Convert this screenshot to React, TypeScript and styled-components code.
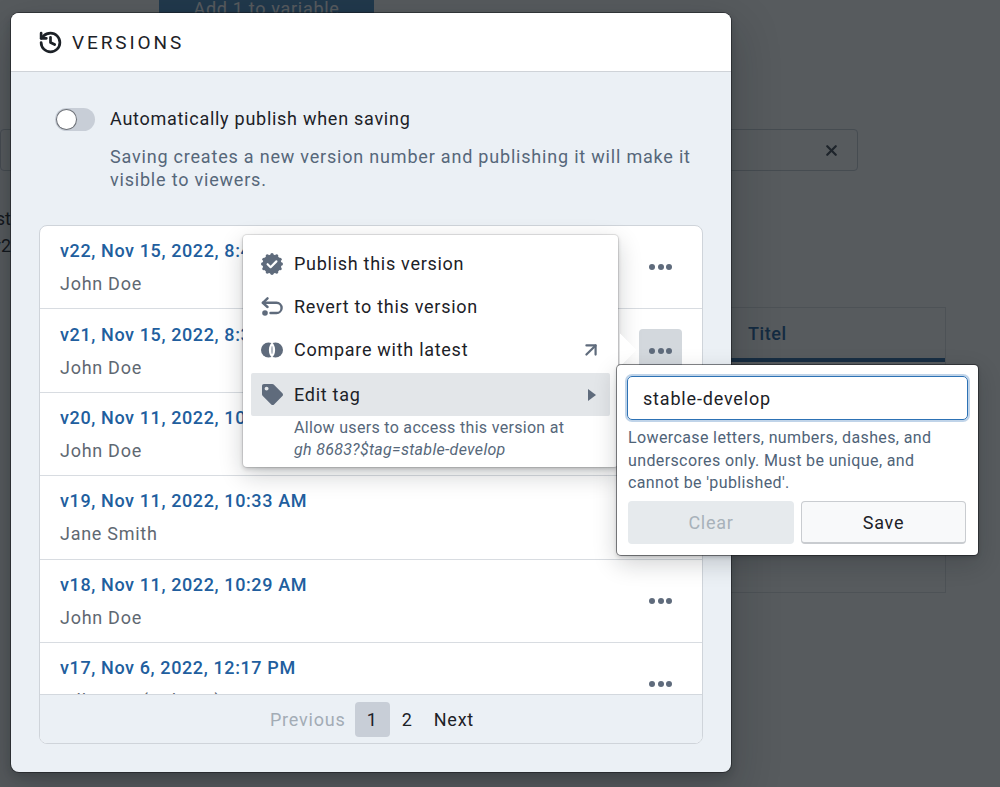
import styled, { createGlobalStyle } from "styled-components";
import { ArrowUpRight, History, X } from "lucide-react";
import { FaTag } from "react-icons/fa";

const GlobalStyle = createGlobalStyle`
  html, body {
    margin: 0;
    padding: 0;
    height: 100%;
    overflow: hidden;
    background: #fff;
    font-family: Roboto, "Liberation Sans", sans-serif;
  }
  * { box-sizing: border-box; }
`;

const Page = styled.div`
  position: relative;
  width: 1000px;
  height: 787px;
  overflow: hidden;
  display: flex;
  flex-direction: column;
  color: #1c2127;
`;

const AddButton = styled.div`
  width: 215px;
  height: 43px;
  margin: -13px 0 0 159px;
  flex: none;
  display: flex;
  align-items: center;
  justify-content: center;
  background: #4a8cc4;
  color: #fff;
  font-size: 18px;
  letter-spacing: 0.7px;
`;

const SearchField = styled.div`
  width: 858px;
  height: 42px;
  margin-top: 99px;
  flex: none;
  padding-right: 17px;
  display: flex;
  align-items: center;
  justify-content: flex-end;
  border: 1px solid #c5cbd3;
  border-radius: 4px;
  color: #404854;
`;

const LowerRow = styled.div`
  display: flex;
  align-items: flex-start;
  margin-top: 34px;
`;

const SideNote = styled.div`
  width: 60px;
  margin: 0 440px 0 -49px;
  flex: none;
  text-align: right;
  font-size: 18px;
  line-height: 27px;
  white-space: nowrap;
`;

const TableBox = styled.div`
  width: 495px;
  height: 286px;
  margin-top: 102px;
  flex: none;
  border: 1px solid #dce0e5;
`;

const TableHead = styled.div`
  height: 54px;
  padding-left: 296px;
  display: flex;
  align-items: center;
  border-bottom: 4px solid #2d6aa3;
  color: #215e9e;
  font-size: 18px;
  font-weight: 500;
  letter-spacing: 0.6px;
`;

const Backdrop = styled.div`
  position: absolute;
  inset: 0;
  background: rgba(16, 22, 26, 0.7);
`;

const Modal = styled.div`
  position: absolute;
  left: 11px;
  top: 13px;
  width: 720px;
  height: 759px;
  display: flex;
  flex-direction: column;
  background: #ebf0f5;
  border-radius: 8px;
  box-shadow:
    0 0 0 1px rgba(17, 20, 24, 0.5),
    0 4px 8px rgba(17, 20, 24, 0.2),
    0 18px 46px 6px rgba(17, 20, 24, 0.2);
`;

const ModalHeader = styled.header`
  height: 59px;
  flex: none;
  padding-left: 27px;
  display: flex;
  align-items: center;
  gap: 9px;
  background: #fff;
  border-bottom: 1px solid #cfd3d8;
  border-radius: 8px 8px 0 0;
`;

const ModalTitle = styled.h2`
  margin: 0;
  font-size: 19px;
  font-weight: 400;
  letter-spacing: 2.9px;
  color: #1c2127;
`;

const ModalBody = styled.div`
  flex: 1;
  padding: 35px 28px 28px;
  display: flex;
  flex-direction: column;
`;

const ToggleRow = styled.div`
  margin-left: 16px;
  display: flex;
  align-items: center;
  gap: 15px;
  font-size: 18px;
  letter-spacing: 0.73px;
  line-height: 24px;
`;

const ToggleTrack = styled.span`
  width: 40px;
  height: 23px;
  padding: 2px;
  flex: none;
  background: #c8ced7;
  border-radius: 12px;
`;

const ToggleKnob = styled.span`
  display: block;
  width: 19px;
  height: 19px;
  background: #fff;
  border-radius: 50%;
  box-shadow: 0 0 0 1px rgba(17, 20, 24, 0.5);
`;

const HelpText = styled.p`
  width: 590px;
  margin: 14px 0 34px 71px;
  font-size: 18px;
  letter-spacing: 0.8px;
  line-height: 23px;
  color: #56677a;
`;

const VersionCard = styled.div`
  height: 519px;
  flex: none;
  display: flex;
  flex-direction: column;
  background: #fff;
  border: 1px solid #cfd4da;
  border-radius: 8px;
  overflow: hidden;
`;

const VersionList = styled.div`
  flex: 1;
  min-height: 0;
  overflow: hidden;
`;

const VersionRow = styled.div`
  height: 83.4px;
  padding-right: 20px;
  display: flex;
  align-items: center;
  justify-content: space-between;
  border-bottom: 1px solid #d8dce1;
`;

const VersionText = styled.div`
  padding-left: 20px;
  display: flex;
  flex-direction: column;
  gap: 10px;
`;

const VersionTitle = styled.span`
  font-size: 18px;
  font-weight: 500;
  letter-spacing: 0.62px;
  line-height: 23px;
  color: #215e9e;
`;

const VersionAuthor = styled.span`
  font-size: 18px;
  letter-spacing: 0.72px;
  line-height: 23px;
  color: #5f6872;
`;

const DotsButton = styled.div<{ $active?: boolean }>`
  width: 43px;
  height: 43px;
  display: flex;
  align-items: center;
  justify-content: center;
  gap: 2.5px;
  border-radius: 4px;
  background: ${(p) => (p.$active ? "#d3d8dd" : "transparent")};
`;

const Dot = styled.span`
  width: 6px;
  height: 6px;
  background: #5f6b7c;
  border-radius: 50%;
`;

const Pager = styled.nav`
  height: 49px;
  flex: none;
  padding-left: 2px;
  display: flex;
  align-items: center;
  justify-content: center;
  background: #ebf0f5;
  border-top: 1px solid #d3d8de;
  font-size: 18px;
  letter-spacing: 0.8px;
`;

const PageLink = styled.span<{ $disabled?: boolean; $current?: boolean }>`
  min-width: 35px;
  height: 35px;
  padding: 0 9px;
  display: flex;
  align-items: center;
  justify-content: center;
  border-radius: 4px;
  color: ${(p) => (p.$disabled ? "#a3acb5" : "#1c2127")};
  background: ${(p) => (p.$current ? "#c8ced7" : "transparent")};
`;

const Menu = styled.div`
  position: absolute;
  left: 232px;
  top: 222px;
  width: 375px;
  height: 232px;
  padding: 7px 8px;
  background: #fff;
  border-radius: 4px;
  box-shadow:
    0 0 0 1px rgba(17, 20, 24, 0.1),
    0 2px 4px rgba(17, 20, 24, 0.2),
    0 8px 24px rgba(17, 20, 24, 0.2);
`;

const MenuArrow = styled.span`
  position: absolute;
  right: -14px;
  top: 103px;
  width: 24px;
  height: 24px;
  background: #fff;
  transform: rotate(45deg);
  clip-path: polygon(0 0, 100% 0, 100% 100%);
`;

const MenuItem = styled.div<{ $active?: boolean }>`
  height: 43px;
  margin-top: ${(p) => (p.$active ? "2px" : "0")};
  padding: 0 14px 0 10px;
  display: flex;
  align-items: center;
  gap: 11px;
  border-radius: 2px;
  font-size: 18px;
  letter-spacing: 0.72px;
  color: #1c2127;
  background: ${(p) => (p.$active ? "#e3e6e9" : "transparent")};
`;

const MenuIcon = styled.span`
  width: 22px;
  height: 22px;
  flex: none;
  display: flex;
  align-items: center;
  justify-content: center;
  color: #5f6b7c;
`;

const ExternalIcon = styled(MenuIcon)`
  margin-right: -6px;
`;

const MenuLabel = styled.span`
  flex: 1;
`;

const CaretRight = styled.span`
  width: 0;
  height: 0;
  border-style: solid;
  border-width: 6px 0 6px 8px;
  border-color: transparent transparent transparent #5f6b7c;
`;

const MenuNote = styled.div`
  margin-top: 1px;
  padding-left: 43px;
  font-size: 16px;
  letter-spacing: 0.31px;
  line-height: 22px;
  color: #56677a;
`;

const Italic = styled.div`
  font-style: italic;
`;

const SubMenu = styled.div`
  position: absolute;
  left: 606px;
  top: 352px;
  width: 361px;
  height: 190px;
  padding: 11px 10px;
  background: #fff;
  border-radius: 4px;
  box-shadow:
    0 0 0 1px rgba(17, 20, 24, 0.5),
    0 2px 4px rgba(17, 20, 24, 0.2),
    0 8px 24px rgba(17, 20, 24, 0.2);
`;

const TagInput = styled.div`
  height: 44px;
  padding-left: 15px;
  display: flex;
  align-items: center;
  border: 1.5px solid #2d72b5;
  border-radius: 5px;
  box-shadow: 0 0 0 2px rgba(45, 114, 181, 0.3);
  font-size: 18px;
  letter-spacing: 0.82px;
  color: #1c2127;
`;

const TagHelp = styled.p`
  margin: 7px 0 6px 1px;
  font-size: 16px;
  letter-spacing: 0.38px;
  line-height: 22.5px;
  color: #4f6378;
`;

const ButtonRow = styled.div`
  display: grid;
  grid-template-columns: 166px 165px;
  gap: 7px;
  margin-left: 1px;
`;

const ActionButton = styled.div<{ $disabled?: boolean }>`
  height: 43px;
  padding-top: ${(p) => (p.$disabled ? "0" : "1px")};
  display: flex;
  align-items: center;
  justify-content: center;
  border-radius: 4px;
  font-size: 18px;
  letter-spacing: 0.72px;
  color: ${(p) => (p.$disabled ? "#a8b2ba" : "#1c2127")};
  background: ${(p) => (p.$disabled ? "#e6eaed" : "#f8f9fa")};
  border: ${(p) => (p.$disabled ? "none" : "1px solid #c9ccd0")};
  border-bottom-width: ${(p) => (p.$disabled ? "0" : "2px")};
`;

const PublishIcon = () => {
  const bumps = Array.from({ length: 12 }, (_, i) => (i * Math.PI) / 6);
  return (
    <svg width="22" height="22" viewBox="0 0 22 22">
      <circle cx="11" cy="11" r="9.6" fill="currentColor" />
      {bumps.map((a) => (
        <circle key={a} cx={11 + 9.3 * Math.cos(a)} cy={11 + 9.3 * Math.sin(a)} r="1.7" fill="currentColor" />
      ))}
      <path d="M6.6 11.2l3 3 5.8-5.8" fill="none" stroke="#fff" strokeWidth="2.2" strokeLinecap="round" strokeLinejoin="round" />
    </svg>
  );
};

const RevertIcon = () => (
  <svg width="22" height="20" viewBox="0 0 22 20" fill="none" stroke="currentColor" strokeWidth="2.4" strokeLinecap="round" strokeLinejoin="round">
    <path d="M6.5 1.300L1.800 5.800l4.700 4.200" />
    <path d="M2 5.800h13.500a5 5 0 0 1 0 10.200H9.500" />
    <circle cx="4" cy="16" r="2.800" fill="currentColor" stroke="none" />
  </svg>
);

const CompareIcon = () => (
  <svg width="22" height="16" viewBox="0 0 22 16">
    <circle cx="7.500" cy="8" r="7.500" fill="currentColor" />
    <circle cx="14.500" cy="8" r="7.500" fill="currentColor" />
    <path d="M11 0.500C8.800 2.500 7.900 5 7.900 8s0.900 5.500 3.100 7.500c2.200-2 3.100-4.500 3.100-7.500s-0.900-5.500-3.100-7.500z" fill="#fff" />
    <ellipse cx="11" cy="8" rx="0.900" ry="4" fill="#aab2bd" />
  </svg>
);

const versions = [
  { title: "v22, Nov 15, 2022, 8:41 AM", author: "John Doe" },
  { title: "v21, Nov 15, 2022, 8:36 AM", author: "John Doe", active: true },
  { title: "v20, Nov 11, 2022, 10:40 AM", author: "John Doe" },
  { title: "v19, Nov 11, 2022, 10:33 AM", author: "Jane Smith" },
  { title: "v18, Nov 11, 2022, 10:29 AM", author: "John Doe" },
  { title: "v17, Nov 6, 2022, 12:17 PM", author: "Till Haas (Gelman)" },
];

export default function App() {
  return (
    <Page>
      <GlobalStyle />
      <AddButton>Add 1 to variable</AddButton>
      <SearchField>
        <X size={17} strokeWidth={3.2} />
      </SearchField>
      <LowerRow>
        <SideNote>
          Latest
          <br />
          v2
        </SideNote>
        <TableBox>
          <TableHead>Titel</TableHead>
        </TableBox>
      </LowerRow>

      <Backdrop />

      <Modal>
        <ModalHeader>
          <History size={25} strokeWidth={2.6} color="#1c2127" />
          <ModalTitle>VERSIONS</ModalTitle>
        </ModalHeader>
        <ModalBody>
          <ToggleRow>
            <ToggleTrack>
              <ToggleKnob />
            </ToggleTrack>
            Automatically publish when saving
          </ToggleRow>
          <HelpText>Saving creates a new version number and publishing it will make it visible to viewers.</HelpText>
          <VersionCard>
            <VersionList>
              {versions.map((v) => (
                <VersionRow key={v.title}>
                  <VersionText>
                    <VersionTitle>{v.title}</VersionTitle>
                    <VersionAuthor>{v.author}</VersionAuthor>
                  </VersionText>
                  <DotsButton $active={v.active}>
                    <Dot />
                    <Dot />
                    <Dot />
                  </DotsButton>
                </VersionRow>
              ))}
            </VersionList>
            <Pager>
              <PageLink $disabled>Previous</PageLink>
              <PageLink $current>1</PageLink>
              <PageLink>2</PageLink>
              <PageLink>Next</PageLink>
            </Pager>
          </VersionCard>
        </ModalBody>

        <Menu>
          <MenuArrow />
          <MenuItem>
            <MenuIcon>
              <PublishIcon />
            </MenuIcon>
            <MenuLabel>Publish this version</MenuLabel>
          </MenuItem>
          <MenuItem>
            <MenuIcon>
              <RevertIcon />
            </MenuIcon>
            <MenuLabel>Revert to this version</MenuLabel>
          </MenuItem>
          <MenuItem>
            <MenuIcon>
              <CompareIcon />
            </MenuIcon>
            <MenuLabel>Compare with latest</MenuLabel>
            <ExternalIcon>
              <ArrowUpRight size={26} strokeWidth={2.4} />
            </ExternalIcon>
          </MenuItem>
          <MenuItem $active>
            <MenuIcon>
              <FaTag size={21} />
            </MenuIcon>
            <MenuLabel>Edit tag</MenuLabel>
            <CaretRight />
          </MenuItem>
          <MenuNote>
            Allow users to access this version at
            <Italic>gh 8683?$tag=stable-develop</Italic>
          </MenuNote>
        </Menu>

        <SubMenu>
          <TagInput>stable-develop</TagInput>
          <TagHelp>
            Lowercase letters, numbers, dashes, and underscores only. Must be unique, and cannot be 'published'.
          </TagHelp>
          <ButtonRow>
            <ActionButton $disabled>Clear</ActionButton>
            <ActionButton>Save</ActionButton>
          </ButtonRow>
        </SubMenu>
      </Modal>
    </Page>
  );
}
